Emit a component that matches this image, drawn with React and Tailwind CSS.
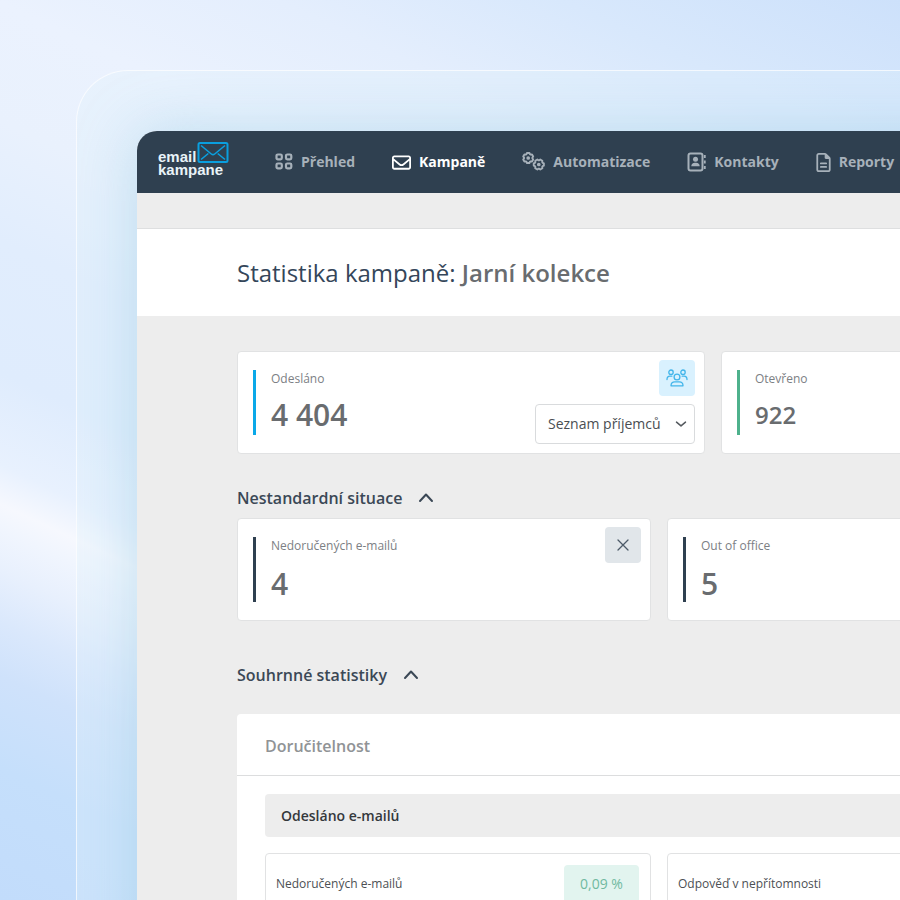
import React from "react";
import { FaRegEnvelope, FaRegFileLines } from "react-icons/fa6";

function gearPath(cx, cy, outer, inner, teeth, turn) {
  const step = (Math.PI * 2) / teeth;
  const at = (radius, angle) =>
    `${(cx + radius * Math.cos(angle)).toFixed(2)} ${(cy + radius * Math.sin(angle)).toFixed(2)}`;
  const points = [];
  for (let i = 0; i < teeth; i += 1) {
    const a = turn + i * step;
    points.push(at(outer, a - step * 0.22), at(outer, a + step * 0.22));
    points.push(at(inner, a + step * 0.4), at(inner, a + step * 0.6));
  }
  return `M${points.join("L")}Z`;
}

function GridIcon() {
  return (
    <svg width="18" height="18" viewBox="0 0 18 18" fill="none" stroke="currentColor" strokeWidth="2.200" aria-hidden="true">
      <rect x="1.500" y="1.500" width="5.300" height="4.800" rx="1.300" />
      <rect x="11" y="1.500" width="5.300" height="4.800" rx="1.300" />
      <rect x="1.500" y="10.500" width="5.300" height="4.800" rx="1.300" />
      <rect x="11" y="10.500" width="5.300" height="4.800" rx="1.300" />
    </svg>
  );
}

function GearsIcon() {
  return (
    <svg width="23" height="20" viewBox="0 0 23 20" fill="none" stroke="currentColor" strokeWidth="1.900" strokeLinejoin="round" aria-hidden="true">
      <path d={gearPath(6.2, 6, 5.2, 4.2, 6, Math.PI / 6)} />
      <circle cx="6.200" cy="6" r="0.900" />
      <path d={gearPath(16.8, 12.500, 5.2, 4.2, 6, 0)} />
      <circle cx="16.800" cy="12.500" r="0.900" />
    </svg>
  );
}

function ContactsIcon() {
  return (
    <svg width="19" height="20" viewBox="0 0 19 20" fill="none" aria-hidden="true">
      <rect x="1.500" y="1.500" width="14" height="17" rx="2" stroke="currentColor" strokeWidth="2" />
      <circle cx="8.500" cy="7.200" r="2.500" fill="currentColor" />
      <path d="M4.300 14.300c0-2.300 1.500-3.600 3.400-3.600h1.600c1.900 0 3.400 1.300 3.400 3.600z" fill="currentColor" />
      <path d="M17.800 3v3M17.800 8.500v3M17.800 14v3" stroke="currentColor" strokeWidth="1.800" />
    </svg>
  );
}

function PeopleIcon() {
  return (
    <svg width="22" height="18" viewBox="0 0 22 18" fill="none" stroke="currentColor" strokeWidth="1.300" strokeLinecap="round" strokeLinejoin="round" aria-hidden="true">
      <circle cx="5" cy="3.200" r="2.200" />
      <circle cx="17" cy="3.200" r="2.200" />
      <circle cx="11" cy="8" r="2.900" />
      <path d="M1 10.500c0-2.200 1.400-3.300 3-3.300h1.800" />
      <path d="M21 10.500c0-2.200-1.400-3.300-3-3.300h-1.800" />
      <path d="M5 16.800c0-2.700 1.600-3.900 3.700-3.900h4.600c2.100 0 3.700 1.200 3.700 3.900z" />
    </svg>
  );
}

function Chevron({ down = false, size = 16 }) {
  return (
    <svg width={size} height={size} viewBox="0 0 16 16" fill="none" stroke="currentColor" strokeWidth="2" strokeLinecap="round" strokeLinejoin="round" aria-hidden="true">
      <path d={down ? "M2 5.500l6 5 6-5" : "M2 11l6-6.500 6 6.500"} />
    </svg>
  );
}

function Logo() {
  return (
    <a href="#domu" className="flex w-[72px] flex-col pb-1.5 font-['Liberation_Sans',sans-serif] text-[15px] font-bold leading-[13px] text-[#e9f3f8]">
      <span className="flex items-end">
        email
        <svg width="33" height="21" viewBox="0 0 33 21" fill="none" stroke="#0a9fdf" strokeWidth="2" className="shrink-0" aria-hidden="true">
          <rect x="2.500" y="1" width="29" height="19" rx="1.500" />
          <path d="M5 3.500l10.300 8.500q1.700 1.400 3.400 0l10.300-8.500M5 17.500l7.300-6M29 17.500l-7.300-6" strokeWidth="1.600" />
        </svg>
      </span>
      <span>kampane</span>
    </a>
  );
}

const navItems = [
  { label: "Přehled", icon: <GridIcon /> },
  { label: "Kampaně", icon: <FaRegEnvelope size={19} />, active: true },
  { label: "Automatizace", icon: <GearsIcon /> },
  { label: "Kontakty", icon: <ContactsIcon /> },
  { label: "Reporty", icon: <FaRegFileLines size={19} className="w-[15px]" /> },
];

function StatCard({ label, value, accent, className, valueClass, children }) {
  return (
    <article className={`flex h-[103px] shrink-0 rounded border border-[#e1e2e3] bg-white pl-[15px] pr-[9px] ${className}`}>
      <div className={`my-[18px] border-l-[3px] pl-[15px] ${accent}`}>
        <p className="text-xs leading-[18px] text-[#7c8084]">{label}</p>
        <p className={`font-semibold text-[#696c6f] ${valueClass}`}>{value}</p>
      </div>
      {children}
    </article>
  );
}

function SectionHeading({ children }) {
  return (
    <h2 className="text-base font-semibold leading-6 text-[#3b4856]">
      <button type="button" className="flex items-center gap-4">
        {children}
        <Chevron />
      </button>
    </h2>
  );
}

export default function App() {
  return (
    <div className="flex h-screen overflow-hidden bg-[linear-gradient(205deg,#cde1fb_0%,#d8e8fc_12%,#e4eefd_22%,#ebf2fe_32%,#e9f1fd_41%,#e1edfd_50%,#dfecfd_60%,#e8f1fe_67%,#f6f8fe_70%,#f0f5fe_72%,#e8f0fd_75%,#dae8fc_79%,#cfe2fb_83%,#c5dffb_90%,#c2dcfb_100%)] pl-[76px] pt-[70px] font-['Open_Sans',sans-serif]">
      <div className="-mb-20 -mr-[680px] flex grow overflow-hidden rounded-tl-[52px] border-l border-t border-white/70 bg-[#e0f3fb]/30 pl-[60px] pt-[60px]">
        <div className="min-w-0 grow overflow-hidden rounded-tl-[20px] bg-[#ededed] shadow-[0_0_60px_rgba(120,185,220,0.36)]">
          <header className="flex h-[62px] items-center gap-[45px] bg-[#2f4050] pl-[21px]">
            <Logo />
            <nav className="flex items-center gap-[37px] text-sm font-bold">
              {navItems.map((item) => (
                <a
                  key={item.label}
                  href="#"
                  aria-current={item.active ? "page" : undefined}
                  className={`flex items-center gap-2 ${item.active ? "text-white" : "text-[#a7b1ba]"}`}
                >
                  {item.icon}
                  {item.label}
                </a>
              ))}
            </nav>
          </header>
          <div className="h-9 border-b border-[#dedfe0]" />
          <div className="bg-white py-6 pl-[100px]">
            <h1 className="text-2xl leading-[39px] text-[#34465a]">
              Statistika kampaně: <strong className="font-semibold text-[#696c6f]">Jarní kolekce</strong>
            </h1>
          </div>

          <main className="pl-[100px] pt-[35px]">
            <div className="flex gap-4">
              <StatCard label="Odesláno" value="4 404" accent="border-[#0aa8e8]" className="w-[468px] justify-between" valueClass="mt-[7px] text-3xl leading-10">
                <div className="flex flex-col items-end gap-2 pt-2">
                  <button type="button" aria-label="Příjemci" className="flex size-9 items-center justify-center rounded bg-[#d9f1fe] text-[#42b5ea]">
                    <PeopleIcon />
                  </button>
                  <div className="relative text-[#54595e]">
                    <select aria-label="Zobrazit" className="h-10 w-40 appearance-none rounded border border-[#d9dbdd] bg-white pl-3 text-sm text-[#4a4e52]">
                      <option>Seznam příjemců</option>
                    </select>
                    <span className="pointer-events-none absolute inset-y-0 right-2 flex items-center">
                      <Chevron down size={12} />
                    </span>
                  </div>
                </div>
              </StatCard>
              <StatCard label="Otevřeno" value="922" accent="border-[#4eb18c]" className="w-[468px]" valueClass="mt-[7px] text-2xl leading-10" />
            </div>

            <section className="pt-8">
              <SectionHeading>Nestandardní situace</SectionHeading>
              <div className="mt-2 flex gap-4">
                <StatCard label="Nedoručených e-mailů" value="4" accent="border-[#2f4050]" className="w-[414px] justify-between" valueClass="mt-[11px] text-3xl leading-9">
                  <button type="button" aria-label="Zavřít" className="mt-2 flex size-9 items-center justify-center rounded bg-[#e1e6ea] text-[#4c5a68]">
                    <svg width="12" height="12" viewBox="0 0 12 12" stroke="currentColor" strokeWidth="1.300" strokeLinecap="round" aria-hidden="true">
                      <path d="M1 1l10 10M11 1L1 11" />
                    </svg>
                  </button>
                </StatCard>
                <StatCard label="Out of office" value="5" accent="border-[#2f4050]" className="w-[414px]" valueClass="mt-[11px] text-3xl leading-9" />
              </div>
            </section>

            <section className="pt-[42px]">
              <SectionHeading>Souhrnné statistiky</SectionHeading>
              <div className="mt-[27px] rounded-tl bg-white">
                <h3 className="border-b border-[#dcddde] px-7 pb-4 pt-5 text-base font-semibold leading-[25px] text-[#909396]">
                  Doručitelnost
                </h3>
                <div className="flex flex-col gap-4 px-7 py-[18px]">
                  <h4 className="rounded bg-[#ededed] px-4 text-sm font-semibold leading-[43px] text-[#34383c]">
                    Odesláno e-mailů
                  </h4>
                  <div className="flex gap-4">
                    <div className="flex h-[62px] w-[386px] shrink-0 items-center justify-between rounded border border-[#e1e2e3] pl-[10px] pr-[11px] text-xs text-[#4c5054]">
                      Nedoručených e-mailů
                      <span className="w-[75px] rounded bg-[#e2f4ef] text-center text-sm leading-[38px] text-[#70b9a0]">0,09 %</span>
                    </div>
                    <div className="flex h-[62px] w-[386px] shrink-0 items-center rounded border border-[#e1e2e3] pl-[10px] text-xs text-[#4c5054]">
                      Odpověď v nepřítomnosti
                    </div>
                  </div>
                </div>
              </div>
            </section>
          </main>
        </div>
      </div>
    </div>
  );
}
